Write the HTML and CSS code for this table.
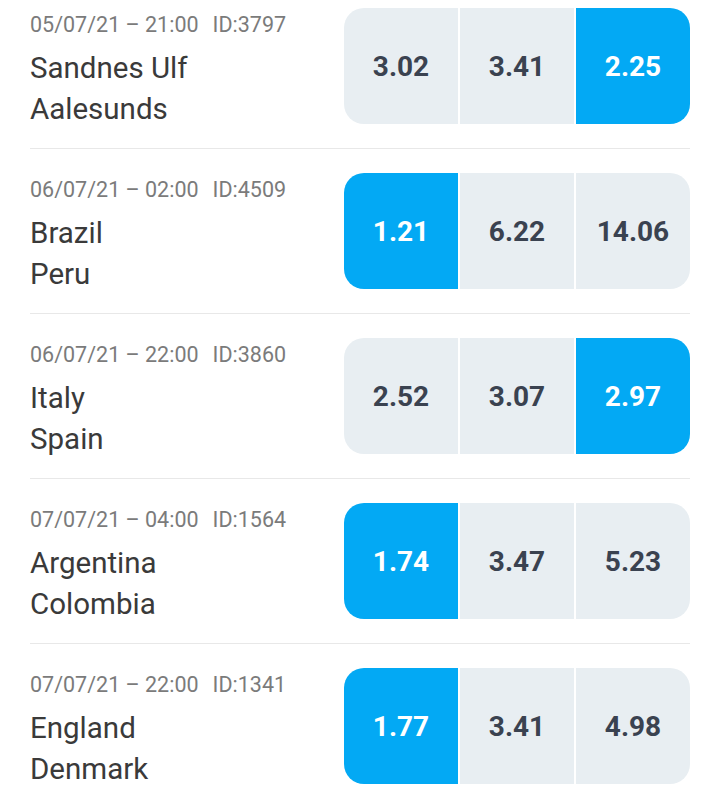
FILE: index.html
```html
<!DOCTYPE html>
<html>
<head>
<meta charset="utf-8">
<link rel="stylesheet" href="styles.css">
</head>
<body>
<div class="list">
  <div class="match first">
    <div class="info">
      <div class="meta"><span>05/07/21 – 21:00</span><span>ID:3797</span></div>
      <div class="team t1">Sandnes Ulf</div>
      <div class="team">Aalesunds</div>
    </div>
    <div class="odds">
      <div class="odd">3.02</div>
      <div class="odd">3.41</div>
      <div class="odd sel">2.25</div>
    </div>
  </div>
  <div class="match">
    <div class="info">
      <div class="meta"><span>06/07/21 – 02:00</span><span>ID:4509</span></div>
      <div class="team t1">Brazil</div>
      <div class="team">Peru</div>
    </div>
    <div class="odds">
      <div class="odd sel">1.21</div>
      <div class="odd">6.22</div>
      <div class="odd">14.06</div>
    </div>
  </div>
  <div class="match">
    <div class="info">
      <div class="meta"><span>06/07/21 – 22:00</span><span>ID:3860</span></div>
      <div class="team t1">Italy</div>
      <div class="team">Spain</div>
    </div>
    <div class="odds">
      <div class="odd">2.52</div>
      <div class="odd">3.07</div>
      <div class="odd sel">2.97</div>
    </div>
  </div>
  <div class="match">
    <div class="info">
      <div class="meta"><span>07/07/21 – 04:00</span><span>ID:1564</span></div>
      <div class="team t1">Argentina</div>
      <div class="team">Colombia</div>
    </div>
    <div class="odds">
      <div class="odd sel">1.74</div>
      <div class="odd">3.47</div>
      <div class="odd">5.23</div>
    </div>
  </div>
  <div class="match">
    <div class="info">
      <div class="meta"><span>07/07/21 – 22:00</span><span>ID:1341</span></div>
      <div class="team t1">England</div>
      <div class="team">Denmark</div>
    </div>
    <div class="odds">
      <div class="odd sel">1.77</div>
      <div class="odd">3.41</div>
      <div class="odd">4.98</div>
    </div>
  </div>
</div>
</body>
</html>
```
FILE: styles.css
```css
html, body {
  margin: 0;
  padding: 0;
  background: #ffffff;
  font-family: Roboto, "Noto Sans", sans-serif;
  overflow: hidden;
}
.list {
  display: flex;
  flex-direction: column;
  padding: 0 30px;
}
.match {
  display: flex;
  justify-content: space-between;
  align-items: flex-start;
  padding: 24px 0;
  border-bottom: 1px solid #e8e8e8;
}
.match.first {
  padding-top: 8px;
}
.info {
  height: 116px;
  display: flex;
  flex-direction: column;
}
.meta {
  display: flex;
  gap: 14px;
  font-size: 21.5px;
  line-height: 28px;
  padding-top: 3px;
  color: #7b7b7b;
}
.team {
  font-size: 29.5px;
  line-height: 41px;
  color: #3a3a3a;
}
.team.t1 {
  margin-top: 9px;
}
.odds {
  display: flex;
  gap: 2px;
  width: 346px;
  height: 116px;
  border-radius: 20px;
  overflow: hidden;
}
.odd {
  flex: 1;
  display: flex;
  align-items: center;
  justify-content: center;
  padding-top: 1px;
  background: #e8eef2;
  color: #3a4250;
  font-weight: 700;
  font-size: 28px;
}
.odd.sel {
  background: #03a9f4;
  color: #ffffff;
}
```
